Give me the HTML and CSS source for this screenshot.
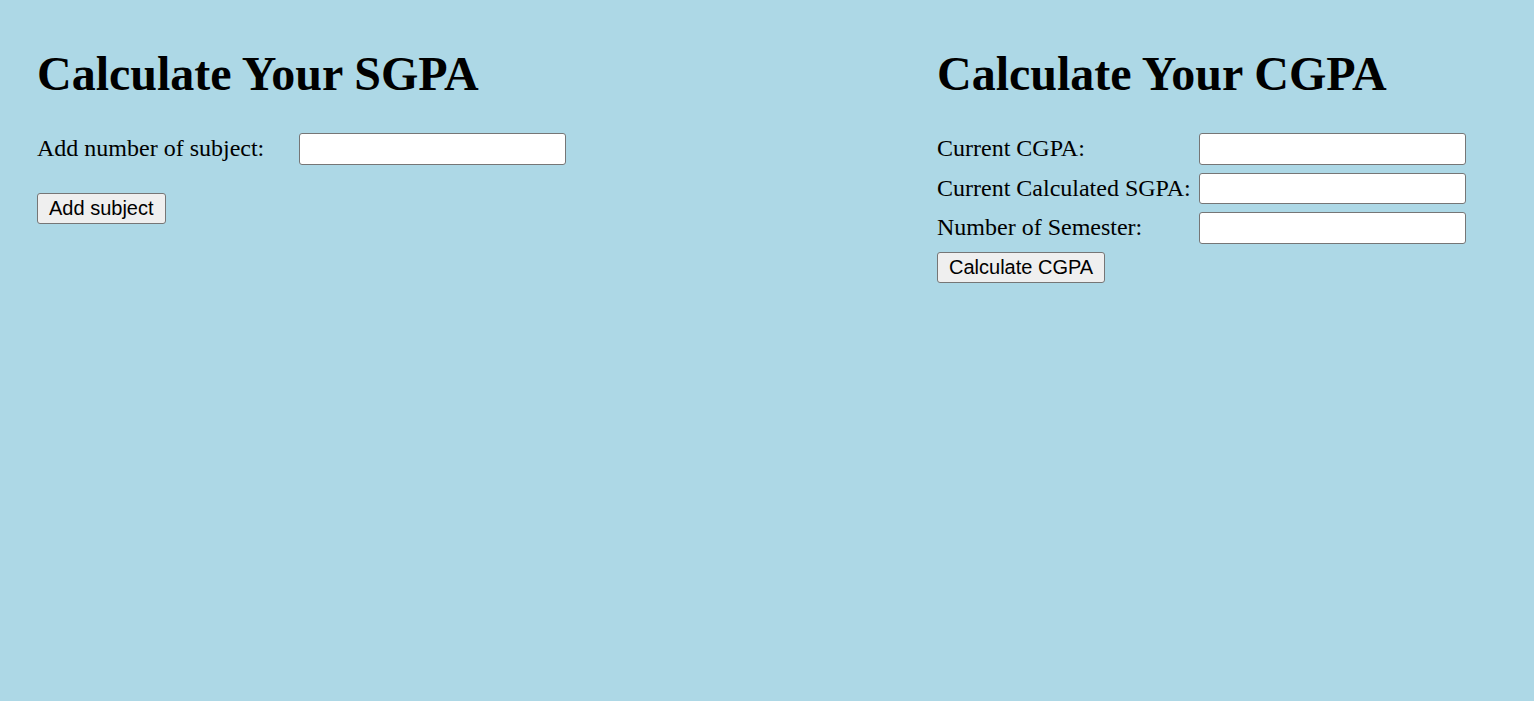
FILE: index.html
```html
<!DOCTYPE html>
<html lang="en">
<head>
<meta charset="utf-8">
<title>SGPA / CGPA Calculator</title>
<link rel="stylesheet" href="styles.css">
</head>
<body>
<main class="page">
  <section class="panel">
    <h1 class="title">Calculate Your SGPA</h1>
    <div class="row">
      <label class="label" for="subjects">Add number of subject:</label>
      <input class="field" id="subjects" type="text">
    </div>
    <div class="actions actions-gap">
      <button class="btn" type="button">Add subject</button>
    </div>
  </section>
  <section class="panel">
    <h1 class="title">Calculate Your CGPA</h1>
    <div class="rows">
      <div class="row">
        <label class="label" for="cgpa">Current CGPA:</label>
        <input class="field" id="cgpa" type="text">
      </div>
      <div class="row">
        <label class="label" for="sgpa">Current Calculated SGPA:</label>
        <input class="field" id="sgpa" type="text">
      </div>
      <div class="row">
        <label class="label" for="sem">Number of Semester:</label>
        <input class="field" id="sem" type="text">
      </div>
      <div class="actions">
        <button class="btn" type="button">Calculate CGPA</button>
      </div>
    </div>
  </section>
</main>
</body>
</html>
```

FILE: styles.css
```css
html, body {
  margin: 0;
  padding: 0;
  background: #add8e6;
}

body {
  font-family: "Liberation Serif", "Times New Roman", serif;
  color: #000;
}

.page {
  display: grid;
  grid-template-columns: 900px 1fr;
  padding: 46px 0 0 37px;
  min-height: 655px;
}

.panel {
  display: flex;
  flex-direction: column;
}

.title {
  margin: 0 0 31px 0;
  font-size: 48px;
  line-height: 56px;
  font-weight: bold;
}

.rows {
  display: flex;
  flex-direction: column;
  gap: 8.1px;
}

.row {
  display: flex;
  align-items: center;
}

.label {
  width: 262px;
  flex: none;
  font-size: 24px;
  line-height: 27px;
}

.field {
  box-sizing: border-box;
  width: 267px;
  height: 31.5px;
  margin: 0;
  padding: 1px 3px;
  border: 1px solid #767676;
  border-radius: 3px;
  background: #fff;
  font-family: "Liberation Sans", Arial, sans-serif;
  font-size: 20px;
}

.actions {
  display: flex;
}

.actions-gap {
  margin-top: 28px;
}

.btn {
  box-sizing: border-box;
  height: 31.5px;
  margin: 0;
  padding: 0 11px;
  border: 1px solid #767676;
  border-radius: 3px;
  background: #efefef;
  color: #000;
  font-family: "Liberation Sans", Arial, sans-serif;
  font-size: 20px;
  line-height: 23px;
}
```
